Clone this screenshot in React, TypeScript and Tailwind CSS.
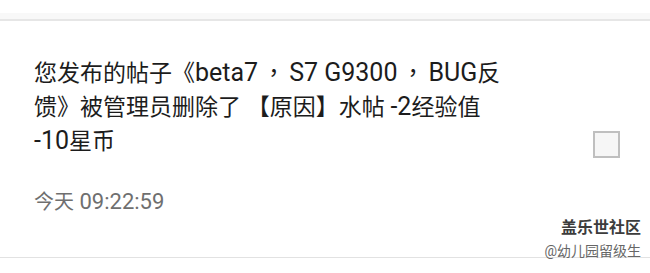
function L({ children }: { children: React.ReactNode }) {
  return <span className="text-[25px]">{children}</span>;
}

export default function App() {
  const comma = (
    <span className="mx-[4px]" style={{ fontFamily: '"Noto Sans CJK TC", sans-serif' }}>
      ，
    </span>
  );
  return (
    <div
      className="relative w-[650px] h-[273px] bg-white overflow-hidden"
      style={{ fontFamily: 'Roboto, "Noto Sans CJK SC", sans-serif' }}
    >
      <div className="h-[13px] bg-white" />
      <div className="h-[6px] bg-[#f8f8f8]" />
      <div className="h-[2px] bg-[#e6e6e6]" />
      <div className="pl-[34px] pr-[30px] pt-[34px]">
        <div className="flex items-end justify-between">
          <p className="text-[23px] leading-[33px] text-[#1c1c1c] whitespace-nowrap">
            您发布的帖子《<L>beta7</L>
            {comma}
            <L>S7 G9300</L>
            {comma}
            <L>BUG</L>反
            <br />
            馈》被管理员删除了 【原因】水帖 <L>-2</L>经验值
            <br />
            <L>-10</L>星币
          </p>
          <div className="h-[27px] w-[27px] border-2 border-[#bfbfbf] bg-[#f6f6f6]" />
        </div>
        <div className="mt-[31px] leading-[26px] text-[#6f6f6f]">
          <span className="text-[20px]">今天</span>
          <span className="text-[22px]"> 09:22:59</span>
        </div>
      </div>
      <div className="absolute left-0 right-0 top-[257px] h-px bg-[#e2e2e2]" />
      <div className="absolute right-[9px] top-[220px] flex flex-col items-end leading-none">
        <span className="text-[16px] font-bold text-[#3c3c3c]">盖乐世社区</span>
        <span className="mt-[8px] text-[14px] text-[#666]">@幼儿园留级生</span>
      </div>
    </div>
  );
}
